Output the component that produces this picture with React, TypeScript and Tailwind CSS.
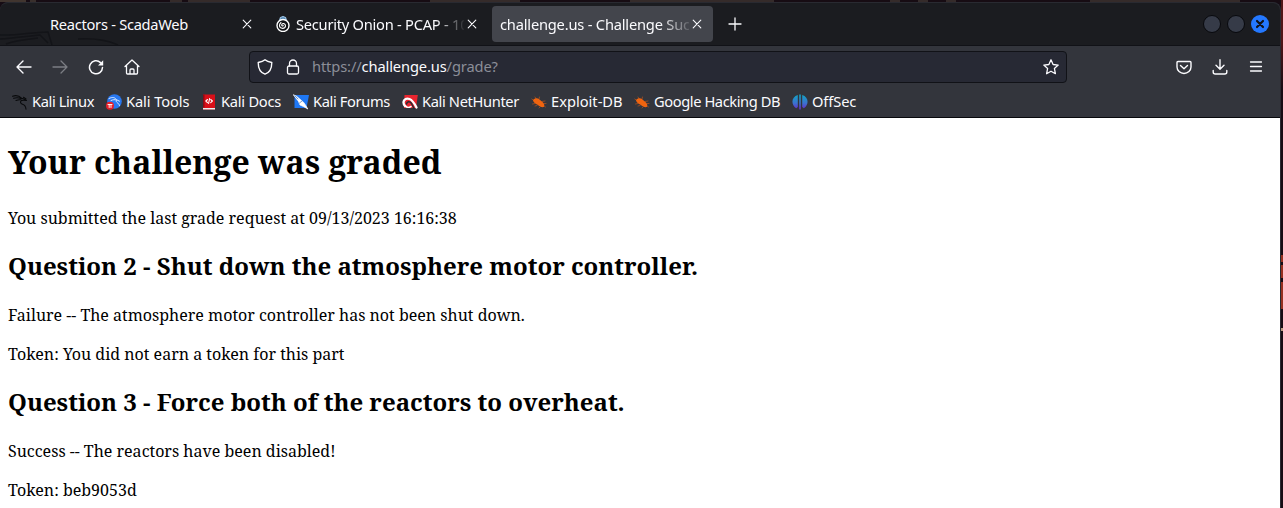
import React from "react";

const Svg = ({ children, className = "size-4", box = "0 0 16 16", sw = 1.3 }: { children: React.ReactNode; className?: string; box?: string; sw?: number }) => (
  <svg viewBox={box} className={`${className} shrink-0`} fill="none" stroke="currentColor" strokeWidth={sw} strokeLinecap="round" strokeLinejoin="round">
    {children}
  </svg>
);

const Close = () => (
  <Svg sw={1.1}><path d="M4.200 4.200l7.600 7.600M11.800 4.200l-7.600 7.600" /></Svg>
);

const Beetle = () => (
  <Svg sw={0.7}>
    <g stroke="#b9541d"><path d="M3 6.500L.8 5M5 4.500L4 3M8 5l.5-2M11 7.500l3-.5M13 9.500h2M12.500 11.500l2 1.500M4 9.500l-2.500.5M6 11.500l-2 .5M9 13l-1 1" /></g>
    <path d="M2 6.200C4 3.500 6.500 4 8.500 5.400l3.500 3c1.500 1.500 1.600 3.200.8 4.600-2 .5-4.300-.5-6.200-2.200C4.500 9.500 2.600 9 2 6.200z" fill="#f0640f" stroke="none" />
  </Svg>
);

const bookmarks: { label: string; pos: string; track: string; icon: React.ReactNode }[] = [
  {
    label: "Kali Linux", pos: "w-[94px]", track: "tracking-[-0.4px]",
    icon: (
      <Svg sw={1.1}>
        <g stroke="#08090b"><path d="M.5 2.200C4 1 7 1.500 9.500 4.200c2 .8 4 1 5 2.300-2-.3-3.500-.6-5 .1-1.700 1-1 3 1 3.600 2.500.7 3.200 2 3.500 5M1.500 4.200c3-.8 5-.7 7.500.2M4 6.500c2-.8 3.500-1 5-.7" /><path d="M11.500 3.300l2.500 1.700" /></g>
      </Svg>
    ),
  },
  {
    label: "Kali Tools", pos: "w-[95px]", track: "tracking-[-0.1px]",
    icon: (
      <Svg>
        <circle cx="8.500" cy="7.500" r="7.300" fill="#2878f0" stroke="none" />
        <path d="M3 4.500c4-2 6-.8 7.500 1.200l3 1.500M5 6.500c2-1 4-1 5.500-.5-1.500 2.500 2.500 2.500 3 5.500" stroke="#dbeaff" strokeWidth="1" />
        <circle cx="4" cy="11.800" r="4" fill="#e5202b" stroke="none" />
        <path d="M2 10.500h4M3.200 10.500v3M5 10.500v3" stroke="#fff" strokeWidth=".9" />
      </Svg>
    ),
  },
  {
    label: "Kali Docs", pos: "w-[92px]", track: "tracking-[-0.25px]",
    icon: (
      <Svg>
        <path d="M2 .5h12v15H2z" fill="#d90f18" stroke="none" />
        <path d="M2 .5h1.500v13H2z" fill="#8e0a13" stroke="none" />
        <path d="M2 14h12v1.500H2z" fill="#eee" stroke="none" />
        <path d="M6.500 5.500L4.800 7l1.700 1.600M9.700 5.500L11.400 7 9.700 8.600M8.600 4.500l-1 5" stroke="#fff" strokeWidth="1.100" />
      </Svg>
    ),
  },
  {
    label: "Kali Forums", pos: "w-[109px]", track: "tracking-[-0.36px]",
    icon: (
      <Svg>
        <path d="M1.500 1H16l-2.500 13h-12z" fill="#1f78f5" stroke="none" />
        <path d="M.5.800l3 1.400 7 6 2.300 3.300 2 3.500-4-2.300-3.800-1.700-1.500-3.500z" fill="#fff" stroke="#fff" strokeWidth=".7" />
        <path d="M6.500 9l2.500-2M2 2l3 3" stroke="#24579b" strokeWidth=".6" />
      </Svg>
    ),
  },
  {
    label: "Kali NetHunter", pos: "w-[129px]", track: "tracking-[-0.36px]",
    icon: (
      <Svg>
        <path d="M2.500 1h13.300L14 14H2z" fill="#e9252f" stroke="none" />
        <path d="M3 12C-.5 7.500 3 3.500 7.500 5c3 1 5 4.500 7 8.500" stroke="#fff" strokeWidth="2.300" />
        <path d="M4.500 10C5 7.200 8 7 9.500 9.500l2.500 5" stroke="#292a31" strokeWidth="1.500" />
        <path d="M3.500 12c1 1.500 3.500 1.800 5.500.5" stroke="#fff" strokeWidth="1.600" />
      </Svg>
    ),
  },
  { label: "Exploit-DB", pos: "w-[103px]", track: "tracking-normal", icon: <Beetle /> },
  { label: "Google Hacking DB", pos: "w-[158px]", track: "tracking-[-0.41px]", icon: <Beetle /> },
  {
    label: "OffSec", pos: "w-[80px]", track: "tracking-[-0.1px]",
    icon: (
      <Svg>
        <defs><linearGradient id="offsec" x1="0" y1="0" x2="0" y2="1"><stop stopColor="#10a6c4" /><stop offset=".55" stopColor="#3b73ce" /><stop offset="1" stopColor="#6c22c9" /></linearGradient></defs>
        <path d="M5.800 1v12l-1.600 1.200C-1.300 10.500-.8 3 5.800 1zM10.200 1c6.600 2 7.100 9.500 1.600 13.200L10.200 13zM7.200.5h1.600V15L8 16l-.8-1z" fill="url(#offsec)" stroke="none" />
      </Svg>
    ),
  },
];

const Heading = ({ children }: { children: React.ReactNode }) => (
  <h2 className="mt-5 h-[33px] text-[24px] leading-[33px] font-bold">{children}</h2>
);
const Line = ({ children }: { children: React.ReactNode }) => <p className="h-[22px] text-[16px] leading-[22px]">{children}</p>;

export default function App() {
  return (
    <div className="flex h-[508px] w-[1283px] overflow-hidden bg-[#160c14] font-['Noto_Sans',sans-serif] text-[#fbfbfe]">
      <div className="flex w-[1281px] flex-col">
        <div className="h-[2px] shrink-0 bg-[linear-gradient(90deg,#41352f_0_26px,#170c13_26px_30px,#392f2c_30px_36px,#170c13_36px_170px,#352b2a_170px_182px,#170c13_182px_188px,#352b2a_188px_250px,#170c13_250px_430px,#352b2a_430px_520px,#170c13_520px_630px,#352b2a_630px_774px,#170c13_774px_890px,#352b2a_890px_900px,#170c13_900px_918px,#352b2a_918px_928px,#170c13_928px_946px,#352b2a_946px_956px,#170c13_956px_1090px,#352b2a_1090px_1240px,#170c13_1240px)]" />
        <div className="flex min-h-0 flex-1 flex-col overflow-hidden rounded-t-lg border-t border-r border-[#292a31] bg-[#33353c]">
          <header className="relative flex h-[43px] shrink-0 items-center border-b border-[#111217] bg-[#1b1c20] text-[14.67px]">
            <svg className="absolute bottom-0 left-0 h-[14px] w-[130px]" viewBox="0 0 130 14" fill="none" stroke="#131418" strokeWidth="1.500"><path d="M0 4C16 5 32 1 48 1l4 13M0 8c14-1 28-3 40-4l8 8M6 13c10-4 22-5 32-6M78 8c15-1 29 1 40 6" /></svg>
            <div className="relative flex w-[264px] items-center pl-[50px]">
              <span className="w-[189px] tracking-[-0.28px] whitespace-nowrap">Reactors - ScadaWeb</span><Close />
            </div>
            <div className="relative flex w-[228px] items-center pl-[11px]">
              <Svg className="mr-[5px] size-4" sw={1.1}>
                <path d="M4.500 4.500L5.500 1.500 8 .6l2.500.9 1 3" fill="#5286b3" stroke="#9bc1e3" />
                <circle cx="8" cy="9.500" r="6" fill="#101115" stroke="#fff" strokeWidth="1.400" />
                <path d="M8.200 9.500c-.3 1-1.700.5-1.500-.7.4-2 3.800-1.500 3.800 1 0 3.400-5.800 3.400-6 0-.1-1.500.5-2.500 1.500-3.300" stroke="#fff" strokeWidth="1.100" />
              </Svg>
              <span className="w-[168px] tracking-[-0.25px] whitespace-nowrap [mask-image:linear-gradient(90deg,#000_140px,transparent_170px)]">Security Onion - PCAP - 10</span>
              <Close />
            </div>
            <div className="relative flex h-9 w-[221px] items-center rounded-[4px] bg-[#43454c] pl-2">
              <span className="w-[189px] tracking-[-0.2px] whitespace-nowrap [mask-image:linear-gradient(90deg,#000_160px,transparent_194px)]">challenge.us - Challenge Succ</span>
              <Close />
            </div>
            <Svg className="ml-[14px] size-4" sw={1.3}><path d="M8 2v12M2 8h12" /></Svg>
            <div className="ml-auto flex items-center gap-[6px] pr-[11px]">
              <span className="size-[18px] rounded-full border border-[#08090d] bg-[#363b48]" />
              <span className="size-[18px] rounded-full border border-[#08090d] bg-[#363b48]" />
              <span className="flex size-[18px] items-center justify-center rounded-full bg-[#2478ff] text-[#111217]"><Svg className="size-3" sw={2.9}><path d="M4 4l8 8M12 4l-8 8" /></Svg></span>
            </div>
          </header>

          <div className="flex h-[41px] shrink-0 items-center pl-4">
            <Svg sw={1.4}><path d="M1 8h14M7 2L1 8l6 6" /></Svg>
            <Svg className="ml-5 size-4 text-[#7c7e84]" sw={1.3}><path d="M1 8h14M9 2l6 6-6 6" /></Svg>
            <Svg className="ml-5 size-4" sw={1.5}><path d="M14.500 8.500A6.500 6.500 0 1 1 12.500 3.600" /><path d="M10 6.500h5.200V1.300z" fill="currentColor" stroke="none" /></Svg>
            <Svg className="ml-5 size-4" sw={1.3}><path d="M1 7.500L8 1l7 6.500M2.500 6.500V14q0 1 1 1h9q1 0 1-1V6.500M6 15v-4q0-1 1-1h2q1 0 1 1v4" /></Svg>
            <div className="ml-[109px] flex h-8 w-[818px] items-center rounded-[4px] border border-[#111217] bg-[#272934] pl-[7px]">
              <Svg sw={1.4}><path d="M8 .8C6 2.500 3.800 3 1.200 3.500 1.200 10 3 13.500 8 15.200c5-1.700 6.800-5.200 6.800-11.700C12.200 3 10 2.500 8 .8z" /></Svg>
              <Svg className="ml-3 size-4" sw={1.3}><rect x="2.500" y="7" width="11" height="8" rx="1.500" /><path d="M4.500 7V4.500a3.500 3.500 0 0 1 7 0V7" /></Svg>
              <span className="ml-[11px] pb-[2px] text-[14.67px] tracking-[-0.12px] text-[#8c8e98]">https://<span className="text-[#fbfbfe]">challenge.us</span>/grade?</span>
              <Svg className="mr-[7px] ml-auto size-4" sw={1.3}><path d="M8 .8l2.100 4.700 5.100.6-3.800 3.400 1 5.200L8 12.200l-4.400 2.500 1-5.200L.8 6.100l5.100-.6z" /></Svg>
            </div>
            <Svg className="ml-[109px] size-4" sw={1.4}><path d="M2 2.500h12q1 0 1 1V8A7 6.500 0 0 1 1 8V3.500q0-1 1-1zM4.500 6.500L8 9.700l3.500-3.200" /></Svg>
            <Svg className="ml-5 size-4" sw={1.4}><path d="M8 .8V10M4 6.300L8 10.200l4-3.900M1.200 11.500V13q0 2 2 2h9.600q2 0 2-2v-1.500" /></Svg>
            <Svg className="ml-5 size-4" sw={1.3}><path d="M2.500 3h11M2.500 7.500h11M2.500 12h11" /></Svg>
          </div>

          <nav className="flex h-[31px] shrink-0 items-center border-b border-[#08090d] pl-3 text-[14.67px]">
            {bookmarks.map((b) => (
              <div key={b.label} className={`flex shrink-0 items-center gap-1 whitespace-nowrap ${b.pos}`}>
                {b.icon}<span className={`pb-[2px] ${b.track}`}>{b.label}</span>
              </div>
            ))}
          </nav>

          <main className="flex-1 bg-white pl-2 font-['Noto_Serif','DejaVu_Serif',serif] whitespace-nowrap text-black">
            <h1 className="mt-[22px] mb-[23px] h-[44px] text-[32px] leading-[44px] font-bold">Your challenge was graded</h1>
            <Line>You submitted the last grade request at 09/13/2023 16:16:38</Line>
            <Heading>Question 2 - Shut down the atmosphere motor controller.</Heading>
            <div className="mt-[22px] flex flex-col gap-[17px]">
              <Line>Failure -- The atmosphere motor controller has not been shut down.</Line>
              <Line>Token: You did not earn a token for this part</Line>
            </div>
            <Heading>Question 3 - Force both of the reactors to overheat.</Heading>
            <div className="mt-[22px] flex flex-col gap-[17px]">
              <Line>Success -- The reactors have been disabled!</Line>
              <Line>Token: beb9053d</Line>
            </div>
          </main>
        </div>
      </div>
      <div className="w-[2px] bg-[linear-gradient(#511718_0_40px,#160c14_90px_255px,#963020_255px_262px,#160c14_262px_265px,#963020_265px_278px,#160c14_278px_282px,#963020_282px_309px,#160c14_309px_328px,#b99b83_328px_331px,#160c14_331px)]" />
    </div>
  );
}
